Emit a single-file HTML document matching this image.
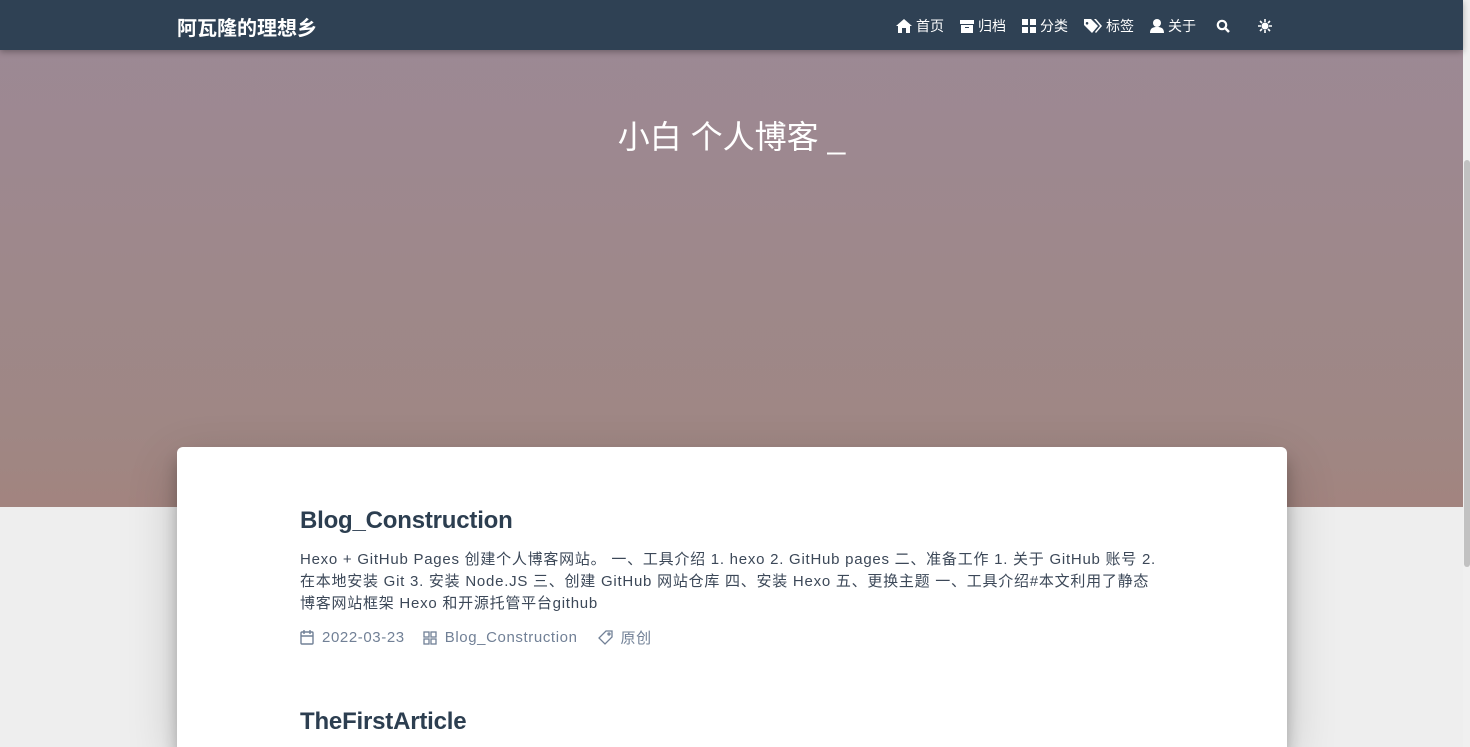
<!DOCTYPE html>
<html><head><meta charset="utf-8"><style>
*{margin:0;padding:0;box-sizing:border-box}
html,body{width:1470px;height:747px;overflow:hidden}
body{background:#eee;font-family:"Liberation Sans","Noto Sans CJK SC",sans-serif;position:relative}
.nav{position:absolute;top:0;left:0;width:1463px;height:50px;background:#2f4154;box-shadow:0 2px 6px rgba(0,0,0,.3);z-index:5;color:#fff}
.brand{position:absolute;left:177px;top:12px;font-size:20px;font-weight:bold}
.menu{position:absolute;left:896px;top:16px;font-size:14px;display:flex;align-items:center}
.menu span{display:flex;align-items:center;margin-right:16px}
.menu svg{margin-right:4px;fill:#fff}
.banner{position:absolute;top:0;left:0;width:1463px;height:507px;background:linear-gradient(#9c8996,#9f8784 85%,#a2847f)}
.banner h1{position:absolute;top:112px;width:100%;text-align:center;color:#fff;font-weight:normal;font-size:32px}
.sb{position:absolute;right:0;top:0;width:7px;height:747px;background:#f0f0f0}
.sb div{position:absolute;left:1px;top:160px;width:6px;height:407px;background:#c1c1c1;border-radius:3px}
.card{position:absolute;left:177px;top:447px;width:1110px;height:300px;background:#fff;border-radius:6px 6px 0 0;box-shadow:0 12px 15px rgba(0,0,0,.24),0 17px 50px rgba(0,0,0,.19)}
.t{position:absolute;left:123px;font-size:24px;font-weight:bold;color:#2c3e50;letter-spacing:-0.2px}
.d{position:absolute;left:123px;top:102px;font-size:15px;line-height:22px;color:#3c4858;white-space:nowrap;letter-spacing:0.75px}
.m{position:absolute;left:123px;top:180px;font-size:15px;color:#718096;display:flex;align-items:center;letter-spacing:0.6px}
.m svg{margin-right:8px}
</style></head><body>
<div class="banner"><h1>小白 个人博客 _</h1></div>
<div class="nav"><div class="brand">阿瓦隆的理想乡</div>
<div class="menu">
<span><svg width="16" height="14" viewBox="0 0 16 14"><path d="M8 0L0 7h2v7h4V9h4v5h4V7h2z"/></svg>首页</span>
<span><svg width="14" height="14" viewBox="0 0 14 14"><rect x="0" y="1" width="14" height="4"/><path d="M1 6h12v8H1zM5 8v1h4V8z"/></svg>归档</span>
<span><svg width="14" height="14" viewBox="0 0 14 14"><rect x="0" y="0" width="6" height="6"/><rect x="8" y="0" width="6" height="6"/><rect x="0" y="8" width="6" height="6"/><rect x="8" y="8" width="6" height="6"/></svg>分类</span>
<span><svg width="18" height="14" viewBox="0 0 18 14"><path d="M0 0h7l7 7-6 7-8-8zM3 3a1.3 1.3 0 1 0 .1 0zM10 0h2l6 7-6 7-1-1 5-6z"/></svg>标签</span>
<span><svg width="14" height="14" viewBox="0 0 14 14"><circle cx="7" cy="4" r="4"/><path d="M0 14c0-5 3-6 7-6s7 1 7 6z"/></svg>关于</span>
<span style="margin-left:4px;margin-right:24px"><svg width="14" height="14" viewBox="0 0 14 14"><circle cx="6" cy="6" r="4.2" fill="none" stroke="#fff" stroke-width="2.2"/><path d="M9 9l4 4" stroke="#fff" stroke-width="2.5"/></svg></span>
<span><svg width="14" height="14" viewBox="0 0 14 14"><circle cx="7" cy="7" r="3.5"/><path d="M7 0v3M7 11v3M0 7h3M11 7h3M2 2l2 2M10 10l2 2M2 12l2-2M10 4l2-2" stroke="#fff" stroke-width="1.6"/></svg></span>
</div></div>
<div class="card">
<div class="t" style="top:60px">Blog_Construction</div>
<div class="d">Hexo + GitHub Pages 创建个人博客网站。 一、工具介绍 1. hexo 2. GitHub pages 二、准备工作 1. 关于 GitHub 账号 2.<br>在本地安装 Git 3. 安装 Node.JS 三、创建 GitHub 网站仓库 四、安装 Hexo 五、更换主题 一、工具介绍#本文利用了静态<br>博客网站框架 Hexo 和开源托管平台github</div>
<div class="m">
<svg width="14" height="15" viewBox="0 0 14 15" fill="none" stroke="#718096" stroke-width="1.4"><rect x="1" y="2" width="12" height="12" rx="1"/><path d="M1 6h12M4 0v4M10 0v4"/></svg>2022-03-23
<svg style="margin-left:18px" width="14" height="14" viewBox="0 0 14 14" fill="none" stroke="#718096" stroke-width="1.3"><rect x="1" y="1" width="5" height="5"/><rect x="8" y="1" width="5" height="5"/><rect x="1" y="8" width="5" height="5"/><rect x="8" y="8" width="5" height="5"/></svg>Blog_Construction
<svg style="margin-left:20px" width="15" height="15" viewBox="0 0 15 15" fill="none" stroke="#718096" stroke-width="1.3"><path d="M8 1h6v6l-7 7-6-6z"/><circle cx="11" cy="4" r="1"/></svg>原创
</div>
<div class="t" style="top:261px">TheFirstArticle</div>
</div>
<div class="sb"><div></div></div>
</body></html>
